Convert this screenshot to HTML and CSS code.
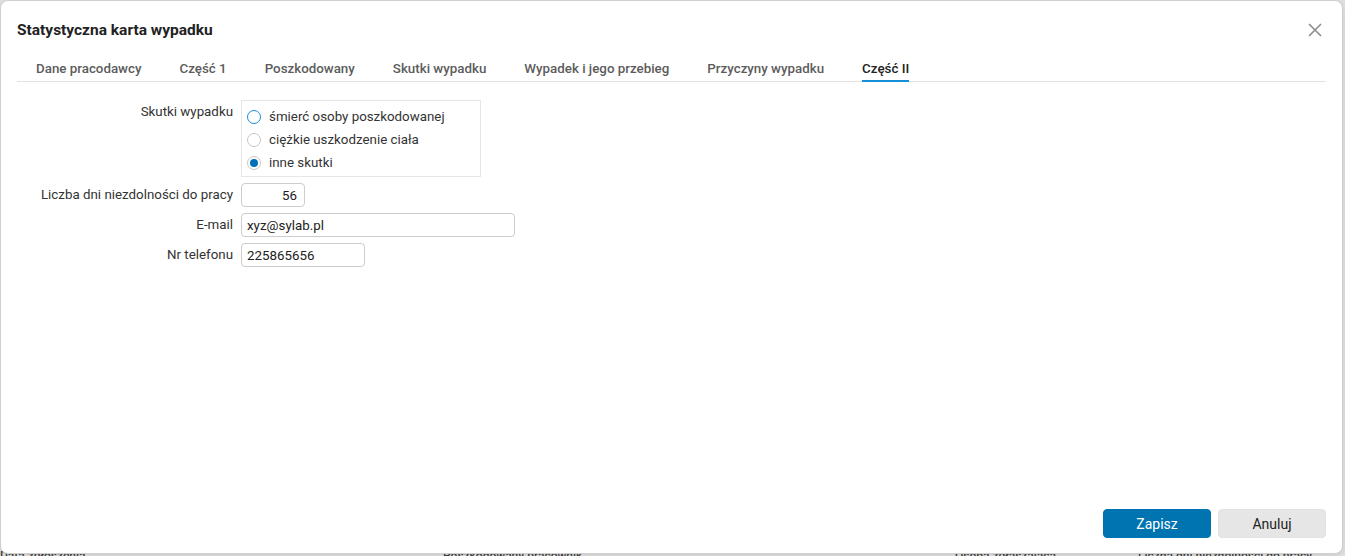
FILE: index.html
```html
<!DOCTYPE html>
<html lang="pl">
<head>
  <meta charset="UTF-8">
  <meta name="viewport" content="width=device-width, initial-scale=1.0">
  <title>Statystyczna karta wypadku</title>
  <link rel="stylesheet" href="styles.css">
</head>
<body>
  <!-- lista w tle, przykryta przez okno -->
  <div class="backdrop">
    <div class="backdrop-head">
      <span class="col col-1">Data zgłoszenia</span>
      <span class="col col-2">Poszkodowany pracownik</span>
      <span class="col col-3">Osoba zgłaszająca</span>
      <span class="col col-4">Liczba dni niezdolności do pracy</span>
    </div>
  </div>

  <div class="dialog" role="dialog" aria-labelledby="dialogTitle">
    <div class="dialog-head">
      <h2 class="dialog-title" id="dialogTitle">Statystyczna karta wypadku</h2>
      <button type="button" class="close-btn" aria-label="Zamknij">
        <svg width="14" height="14" viewBox="0 0 14 14" aria-hidden="true">
          <path d="M1 1 L13 13 M13 1 L1 13" stroke="#8c8c8c" stroke-width="1.6" fill="none"/>
        </svg>
      </button>
    </div>

    <nav class="tabs">
      <a class="tab">Dane pracodawcy</a>
      <a class="tab">Część 1</a>
      <a class="tab">Poszkodowany</a>
      <a class="tab">Skutki wypadku</a>
      <a class="tab">Wypadek i jego przebieg</a>
      <a class="tab">Przyczyny wypadku</a>
      <a class="tab active">Część II</a>
    </nav>

    <form class="form" id="cardForm">
      <div class="form-label">Skutki wypadku</div>
      <div class="radio-group">
        <label class="radio-row">
          <input type="radio" name="skutki" class="radio focused">
          <span>śmierć osoby poszkodowanej</span>
        </label>
        <label class="radio-row">
          <input type="radio" name="skutki" class="radio">
          <span>ciężkie uszkodzenie ciała</span>
        </label>
        <label class="radio-row">
          <input type="radio" name="skutki" class="radio" checked>
          <span>inne skutki</span>
        </label>
      </div>

      <label class="form-label" for="dni">Liczba dni niezdolności do pracy</label>
      <input type="text" id="dni" class="field field-number" value="56">

      <label class="form-label" for="email">E-mail</label>
      <input type="text" id="email" class="field field-email" value="xyz@sylab.pl">

      <label class="form-label" for="telefon">Nr telefonu</label>
      <input type="text" id="telefon" class="field field-phone" value="225865656">
    </form>

    <div class="dialog-foot">
      <button type="submit" form="cardForm" class="btn btn-primary">Zapisz</button>
      <button type="button" class="btn">Anuluj</button>
    </div>
  </div>
</body>
</html>
```

FILE: styles.css
```css
/* Okno karty wypadku */
html, body {
  margin: 0;
  height: 100%;
}

body {
  font-family: Roboto, "Noto Sans", Arial, sans-serif;
  font-size: 13.33px;
  color: #333;
  background-color: #e3e3e3;
  overflow: hidden;
}

/* Tło - nagłówek listy */
.backdrop {
  padding-top: 549px;
}

.backdrop-head {
  display: flex;
  font-size: 12px;
  font-weight: 500;
  color: #444;
  white-space: nowrap;
}

.col-1 { width: 443px; }
.col-2 { width: 512px; }
.col-3 { width: 183px; }

/* Okno */
.dialog {
  position: absolute;
  top: 0;
  left: 0;
  width: 1343px;
  height: 554px;
  box-sizing: border-box;
  display: flex;
  flex-direction: column;
  padding: 18px 16px 15px;
  background-color: #fff;
  border: 1px solid #cfcfcf;
  border-radius: 8px;
  box-shadow: 0 2px 8px rgba(0, 0, 0, 0.12);
}

.dialog-head {
  display: flex;
  align-items: center;
  justify-content: space-between;
}

.dialog-title {
  margin: 0;
  font-size: 15.5px;
  line-height: 20px;
  font-weight: 700;
  color: #222;
}

.close-btn {
  width: 22px;
  height: 22px;
  padding: 0;
  border: none;
  background: none;
  display: flex;
  align-items: center;
  justify-content: center;
  cursor: pointer;
}

/* Zakładki */
.tabs {
  display: flex;
  gap: 38px;
  margin-top: 19px;
  padding-left: 19px;
  border-bottom: 1px solid #e2e2e2;
}

.tab {
  line-height: 18px;
  padding-bottom: 2px;
  margin-bottom: -1px;
  border-bottom: 2px solid transparent;
  font-weight: 500;
  color: #5c5c5c;
  cursor: pointer;
  white-space: nowrap;
}

.tab.active {
  color: #222;
  border-bottom-color: #1590d8;
}

/* Formularz */
.form {
  display: grid;
  grid-template-columns: 216px auto;
  column-gap: 8px;
  row-gap: 6px;
  align-items: start;
  justify-items: start;
  margin: 18px 0 0;
}

.form-label {
  justify-self: end;
  line-height: 24px;
  color: #333;
  white-space: nowrap;
}

.radio-group {
  width: 240px;
  box-sizing: border-box;
  padding: 4px 8px 2px 5px;
  border: 1px solid #e6e6e6;
}

.radio-row {
  display: flex;
  align-items: center;
  gap: 8px;
  height: 23px;
  color: #333;
  cursor: pointer;
}

.radio {
  appearance: none;
  -webkit-appearance: none;
  width: 14px;
  height: 14px;
  margin: 0;
  box-sizing: border-box;
  border: 1px solid #c6c6c6;
  border-radius: 50%;
  background-color: #fff;
  display: grid;
  place-items: center;
}

.radio.focused {
  border: 1.5px solid #1a8cd6;
}

.radio:checked::after {
  content: "";
  width: 8px;
  height: 8px;
  border-radius: 50%;
  background-color: #0070b8;
}

.field {
  height: 24px;
  box-sizing: border-box;
  padding: 0 5px;
  border: 1px solid #cdcdcd;
  border-radius: 4px;
  font-family: Roboto, "Noto Sans", Arial, sans-serif;
  font-size: 13.33px;
  color: #222;
  background-color: #fff;
}

.field-number {
  width: 64px;
  text-align: right;
  padding-right: 7px;
}

.field-email {
  width: 274px;
}

.field-phone {
  width: 124px;
}

/* Stopka */
.dialog-foot {
  margin-top: auto;
  display: flex;
  justify-content: flex-end;
  gap: 7px;
}

.btn {
  width: 108px;
  height: 29px;
  border: 1px solid #e2e2e2;
  border-radius: 4px;
  background-color: #e6e6e6;
  font-family: Roboto, "Noto Sans", Arial, sans-serif;
  font-size: 14px;
  color: #222;
  cursor: pointer;
}

.btn-primary {
  background-color: #0073b1;
  border-color: #0073b1;
  color: #fff;
}
```
